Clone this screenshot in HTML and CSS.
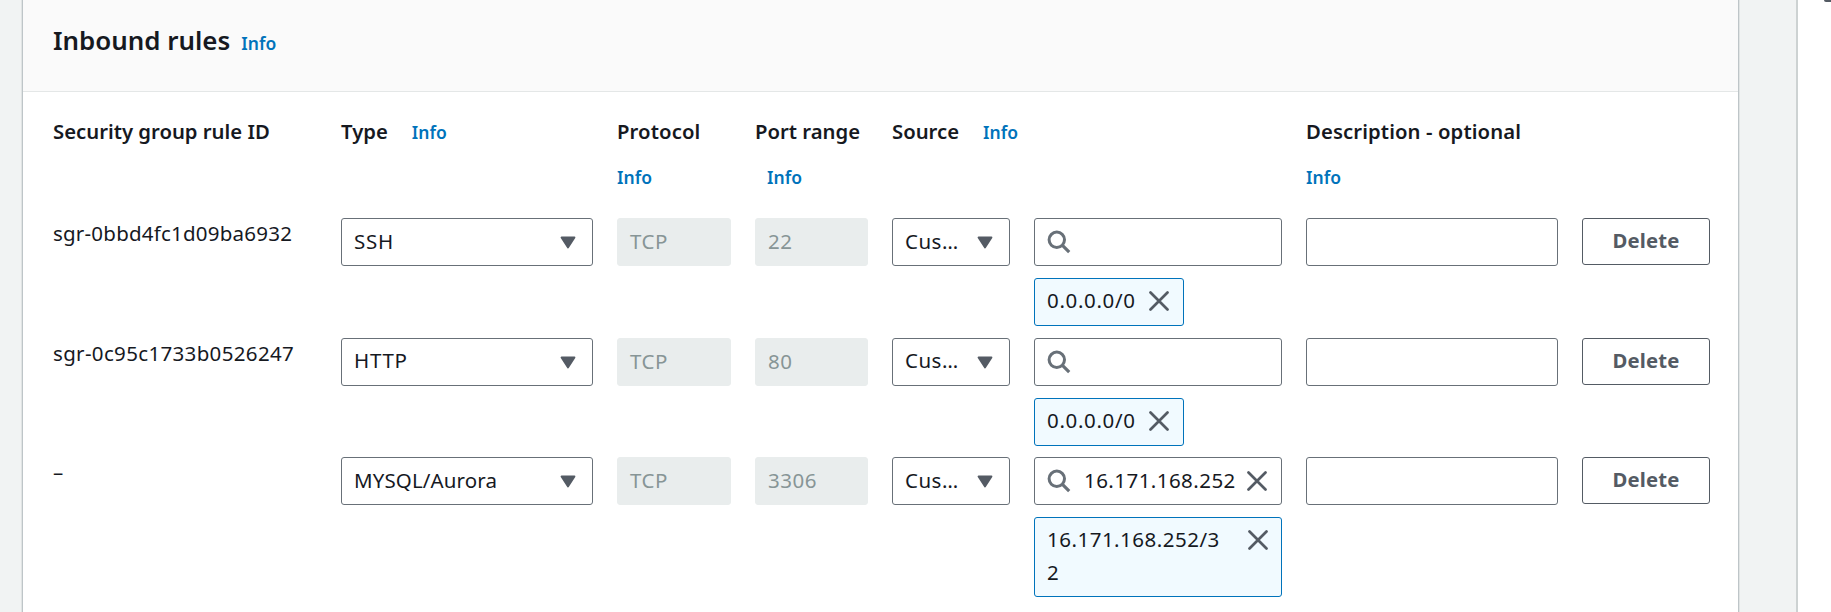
FILE: index.html
```html
<!DOCTYPE html>
<html lang="en">
<head>
<meta charset="utf-8">
<title>Inbound rules</title>
<link rel="stylesheet" href="styles.css">
</head>
<body>
<svg class="defs" aria-hidden="true">
  <symbol id="search" viewBox="0 0 24 24"><circle cx="9.8" cy="9.8" r="7.7" fill="none" stroke="#687078" stroke-width="3"/><path d="M15.2 15.2l7 7" stroke="#687078" stroke-width="3.2"/></symbol>
  <symbol id="close" viewBox="0 0 20 20"><path d="M1.5 1.5l17 17M18.5 1.5l-17 17" fill="none" stroke="#545b64" stroke-width="2.7" stroke-linecap="round"/></symbol>
  <symbol id="caret" viewBox="0 0 16 13"><path d="M1.5 1.5h13L8 11.5z" fill="#545b64" stroke="#545b64" stroke-width="1.8" stroke-linejoin="round"/></symbol>
</svg>
<div class="page">
  <section class="panel">
    <header class="panel-header"><h2>Inbound rules</h2><a class="info">Info</a></header>
    <div class="rules">
      <div class="head">Security group rule ID</div>
      <div class="head">Type<a class="info spaced">Info</a></div>
      <div class="head wide">Protocol<br><a class="info">Info</a></div>
      <div class="head">Port range<br><a class="info indent">Info</a></div>
      <div class="head span-2">Source<a class="info spaced">Info</a></div>
      <div class="head wide span-2">Description - optional<br><a class="info">Info</a></div>

      <div class="rule-id">sgr-0bbd4fc1d09ba6932</div>
      <div class="field select"><span class="caps">SSH</span><svg class="caret"><use href="#caret"/></svg></div>
      <div class="field disabled">TCP</div>
      <div class="field disabled">22</div>
      <div class="field select narrow"><span>Cus…</span><svg class="caret"><use href="#caret"/></svg></div>
      <div class="source">
        <div class="field search"><svg class="search-icon"><use href="#search"/></svg></div>
        <div class="token"><span class="zeros">0.0.0.0/0</span><svg class="close"><use href="#close"/></svg></div>
      </div>
      <div class="field"></div>
      <div class="button">Delete</div>

      <div class="rule-id loose">sgr-0c95c1733b0526247</div>
      <div class="field select raised"><span class="caps">HTTP</span><svg class="caret"><use href="#caret"/></svg></div>
      <div class="field disabled">TCP</div>
      <div class="field disabled">80</div>
      <div class="field select narrow raised"><span>Cus…</span><svg class="caret"><use href="#caret"/></svg></div>
      <div class="source">
        <div class="field search"><svg class="search-icon"><use href="#search"/></svg></div>
        <div class="token"><span class="zeros">0.0.0.0/0</span><svg class="close"><use href="#close"/></svg></div>
      </div>
      <div class="field"></div>
      <div class="button">Delete</div>

      <div class="rule-id">–</div>
      <div class="field select"><span class="mixed">MYSQL/Aurora</span><svg class="caret"><use href="#caret"/></svg></div>
      <div class="field disabled">TCP</div>
      <div class="field disabled">3306</div>
      <div class="field select narrow"><span>Cus…</span><svg class="caret"><use href="#caret"/></svg></div>
      <div class="source">
        <div class="field search"><svg class="search-icon"><use href="#search"/></svg><span class="query">16.171.168.252</span><svg class="close"><use href="#close"/></svg></div>
        <div class="token wrapped"><span>16.171.168.252/32</span><svg class="close"><use href="#close"/></svg></div>
      </div>
      <div class="field"></div>
      <div class="button">Delete</div>
    </div>
  </section>
  <aside class="side"><span class="dot"></span></aside>
</div>
</body>
</html>
```
FILE: styles.css
```css
* { box-sizing: border-box; }
body {
  margin: 0;
  font: 20.5px/30px "Noto Sans", sans-serif;
  color: #16191f;
  background: #f1f3f3;
  overflow: hidden;
}
.defs { position: absolute; width: 0; height: 0; }
.page { display: flex; height: 612px; padding-left: 22px; }
.panel {
  width: 1717px;
  background: #fff;
  border: solid #bec5c8;
  border-width: 0 1px;
  box-shadow: 0 0 0 1px #e0e4e4;
}
.panel-header {
  display: flex;
  align-items: baseline;
  height: 92px;
  padding: 20px 0 0 30px;
  background: #fafafa;
  border-bottom: 1px solid #e4e7e7;
}
h2 { margin: 0 12px 0 0; font-size: 25.9px; font-weight: 600; line-height: 40px; }
.info { font-size: 17.5px; font-weight: 600; letter-spacing: 0; color: #0073bb; }
.panel-header .info { margin-left: -1px; }
.spaced { margin-left: 24px; }
.indent { margin-left: 12px; }

.rules {
  display: grid;
  grid-template-columns: 264px 252px 114px 113px 118px 248px 252px 128px;
  grid-template-rows: 126px 120px 119px 155px;
  column-gap: 24px;
  align-items: start;
  padding-left: 30px;
}
.head { padding-top: 17px; font-size: 20.3px; font-weight: 600; line-height: 45px; white-space: nowrap; }
.wide { letter-spacing: .1px; }
.span-2 { grid-column: span 2; }
.rule-id { letter-spacing: .22px; }
.loose { letter-spacing: .34px; }

.field {
  display: flex;
  align-items: center;
  height: 48px;
  padding: 0 12px 2px;
  border: 1px solid #687078;
  border-radius: 3px;
  background: #fff;
  letter-spacing: .5px;
}
.select { justify-content: space-between; padding-right: 16px; }
.raised span { margin-top: -2px; }
.narrow { padding-left: 12px; }
.caps { letter-spacing: .7px; }
.mixed { letter-spacing: .12px; }
.disabled { background: #e9eded; border-color: #e9eded; color: #879596; letter-spacing: .5px; }
.caret { flex: none; width: 16px; height: 13px; margin-top: 2px; }

.source { display: flex; flex-direction: column; align-items: flex-start; gap: 12px; }
.search { width: 100%; padding-bottom: 0; }
.search-icon { flex: none; width: 24px; height: 24px; }
.query { width: 150px; margin: -2px 13px 0 13px; letter-spacing: .45px; }
.close { flex: none; width: 20px; height: 20px; }
.token {
  display: flex;
  align-items: flex-start;
  justify-content: space-between;
  width: 150px;
  height: 48px;
  padding: 5px 14px 0 12px;
  border: 1px solid #0073bb;
  border-radius: 3px;
  background: #f1faff;
  line-height: 33px;
}
.token .close { margin-top: 7px; }
.zeros { letter-spacing: .65px; }
.wrapped { width: 100%; height: 80px; padding-right: 13px; letter-spacing: .5px; }
.wrapped span { width: 176px; word-break: break-all; }
.button {
  height: 47px;
  border: 1px solid #545b64;
  border-radius: 3px;
  color: #545b64;
  font-size: 20.3px;
  font-weight: 700;
  letter-spacing: .2px;
  line-height: 43px;
  text-align: center;
}
.side {
  flex: 1;
  display: flex;
  justify-content: flex-end;
  margin-left: 57px;
  background: #fff;
  border-left: 2px solid #cdd2d2;
}
.dot { width: 7px; height: 2px; background: #545b64; border-radius: 0 0 0 4px; }
```
